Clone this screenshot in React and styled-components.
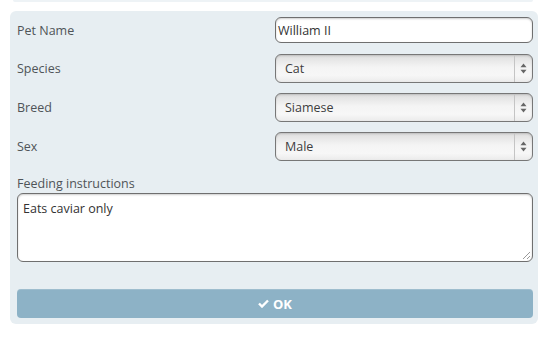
import React from "react";
import styled, { createGlobalStyle } from "styled-components";

const Global = createGlobalStyle`
  html, body { margin: 0; padding: 0; background: #ffffff; }
  body { font-family: "Open Sans", "Lato", sans-serif; }
  * { box-sizing: border-box; }
`;

const Page = styled.div`
  width: 551px;
  height: 340px;
  display: flex;
  flex-direction: column;
  padding: 0 13px 0 10px;
`;

const PrevEdge = styled.div`
  height: 2px;
  margin: 0 5px 9px 3px;
  background: #eef3f6;
  border-radius: 0 0 4px 4px;
`;

const Panel = styled.div`
  background: #e7eef2;
  border-radius: 6px;
  padding: 6px 5px 6px 7px;
  display: flex;
  flex-direction: column;
`;

const Row = styled.div`
  display: grid;
  grid-template-columns: 1fr 258px;
  align-items: center;
  margin-bottom: 10px;
  &:first-child { margin-bottom: 11px; }
`;

const Label = styled.label`
  font-size: 12.5px;
  color: #4f5458;
  line-height: 18px;
  padding-top: 1px;
`;

const TextInput = styled.div`
  height: 26px;
  background: #ffffff;
  border: 1px solid #6f6f6f;
  border-radius: 6px;
  box-shadow: inset 0 1px 2px rgba(0, 0, 0, 0.2);
  font-size: 12.5px;
  color: #333;
  display: flex;
  align-items: center;
  padding-left: 2px;
`;

const SelectBox = styled.div`
  height: 29px;
  display: flex;
  border: 1px solid #777;
  border-radius: 6px;
  background: linear-gradient(#dedede, #f4f4f4 45%, #f7f7f7 75%, #ebebeb);
  box-shadow: inset 0 1px 2px rgba(0, 0, 0, 0.15);
  font-size: 12.5px;
  color: #3d3d3d;
`;

const SelectValue = styled.span`
  flex: 1;
  display: flex;
  align-items: center;
  padding-left: 9px;
`;

const ArrowCell = styled.span`
  width: 18px;
  border-left: 1px solid #c4c4c4;
  display: flex;
  align-items: center;
  justify-content: center;
`;

const Section = styled.div`
  margin-top: 3px;
  display: flex;
  flex-direction: column;
`;

const TextArea = styled.div`
  position: relative;
  height: 69px;
  background: #fff;
  border: 1px solid #6f6f6f;
  border-radius: 6px;
  box-shadow: inset 0 1px 2px rgba(0, 0, 0, 0.2);
  font-size: 12.5px;
  color: #333;
  padding: 6px 5px;
  line-height: 18px;
`;

const Grip = styled.svg`
  position: absolute;
  right: 1px;
  bottom: 1px;
`;

const Button = styled.button`
  margin-top: 27px;
  height: 29px;
  border: none;
  border-radius: 4px;
  background: #8db2c6;
  color: #ffffff;
  font-family: "Open Sans", "Lato", sans-serif;
  font-weight: 700;
  font-size: 13px;
  display: flex;
  align-items: center;
  justify-content: center;
  gap: 4px;
  box-shadow: inset 0 1px 0 rgba(255,255,255,0.15);
`;

const Arrows = () => (
  <svg width="7" height="11" viewBox="0 0 7 11">
    <path d="M3.5 0.5 L6.5 4.2 L0.5 4.2 Z" fill="#666" />
    <path d="M3.5 10.5 L6.5 6.8 L0.5 6.8 Z" fill="#666" />
  </svg>
);

const Select = ({ value }) => (
  <SelectBox>
    <SelectValue>{value}</SelectValue>
    <ArrowCell>
      <Arrows />
    </ArrowCell>
  </SelectBox>
);

export default function App() {
  return (
    <>
      <Global />
      <Page>
        <PrevEdge />
        <Panel>
          <Row>
            <Label>Pet Name</Label>
            <TextInput>William II</TextInput>
          </Row>
          <Row>
            <Label>Species</Label>
            <Select value="Cat" />
          </Row>
          <Row>
            <Label>Breed</Label>
            <Select value="Siamese" />
          </Row>
          <Row>
            <Label>Sex</Label>
            <Select value="Male" />
          </Row>
          <Section>
            <Label>Feeding instructions</Label>
            <TextArea>
              Eats caviar only
              <Grip width="9" height="9" viewBox="0 0 9 9">
                <path d="M8 1 L1 8 M8 5 L5 8" stroke="#999" strokeWidth="1" />
              </Grip>
            </TextArea>
          </Section>
          <Button>
            <svg width="11" height="9" viewBox="0 0 11 9">
              <path d="M1 4.5 L4 7.5 L10 1.5" stroke="#fff" strokeWidth="2.4" fill="none" />
            </svg>
            OK
          </Button>
        </Panel>
      </Page>
    </>
  );
}
